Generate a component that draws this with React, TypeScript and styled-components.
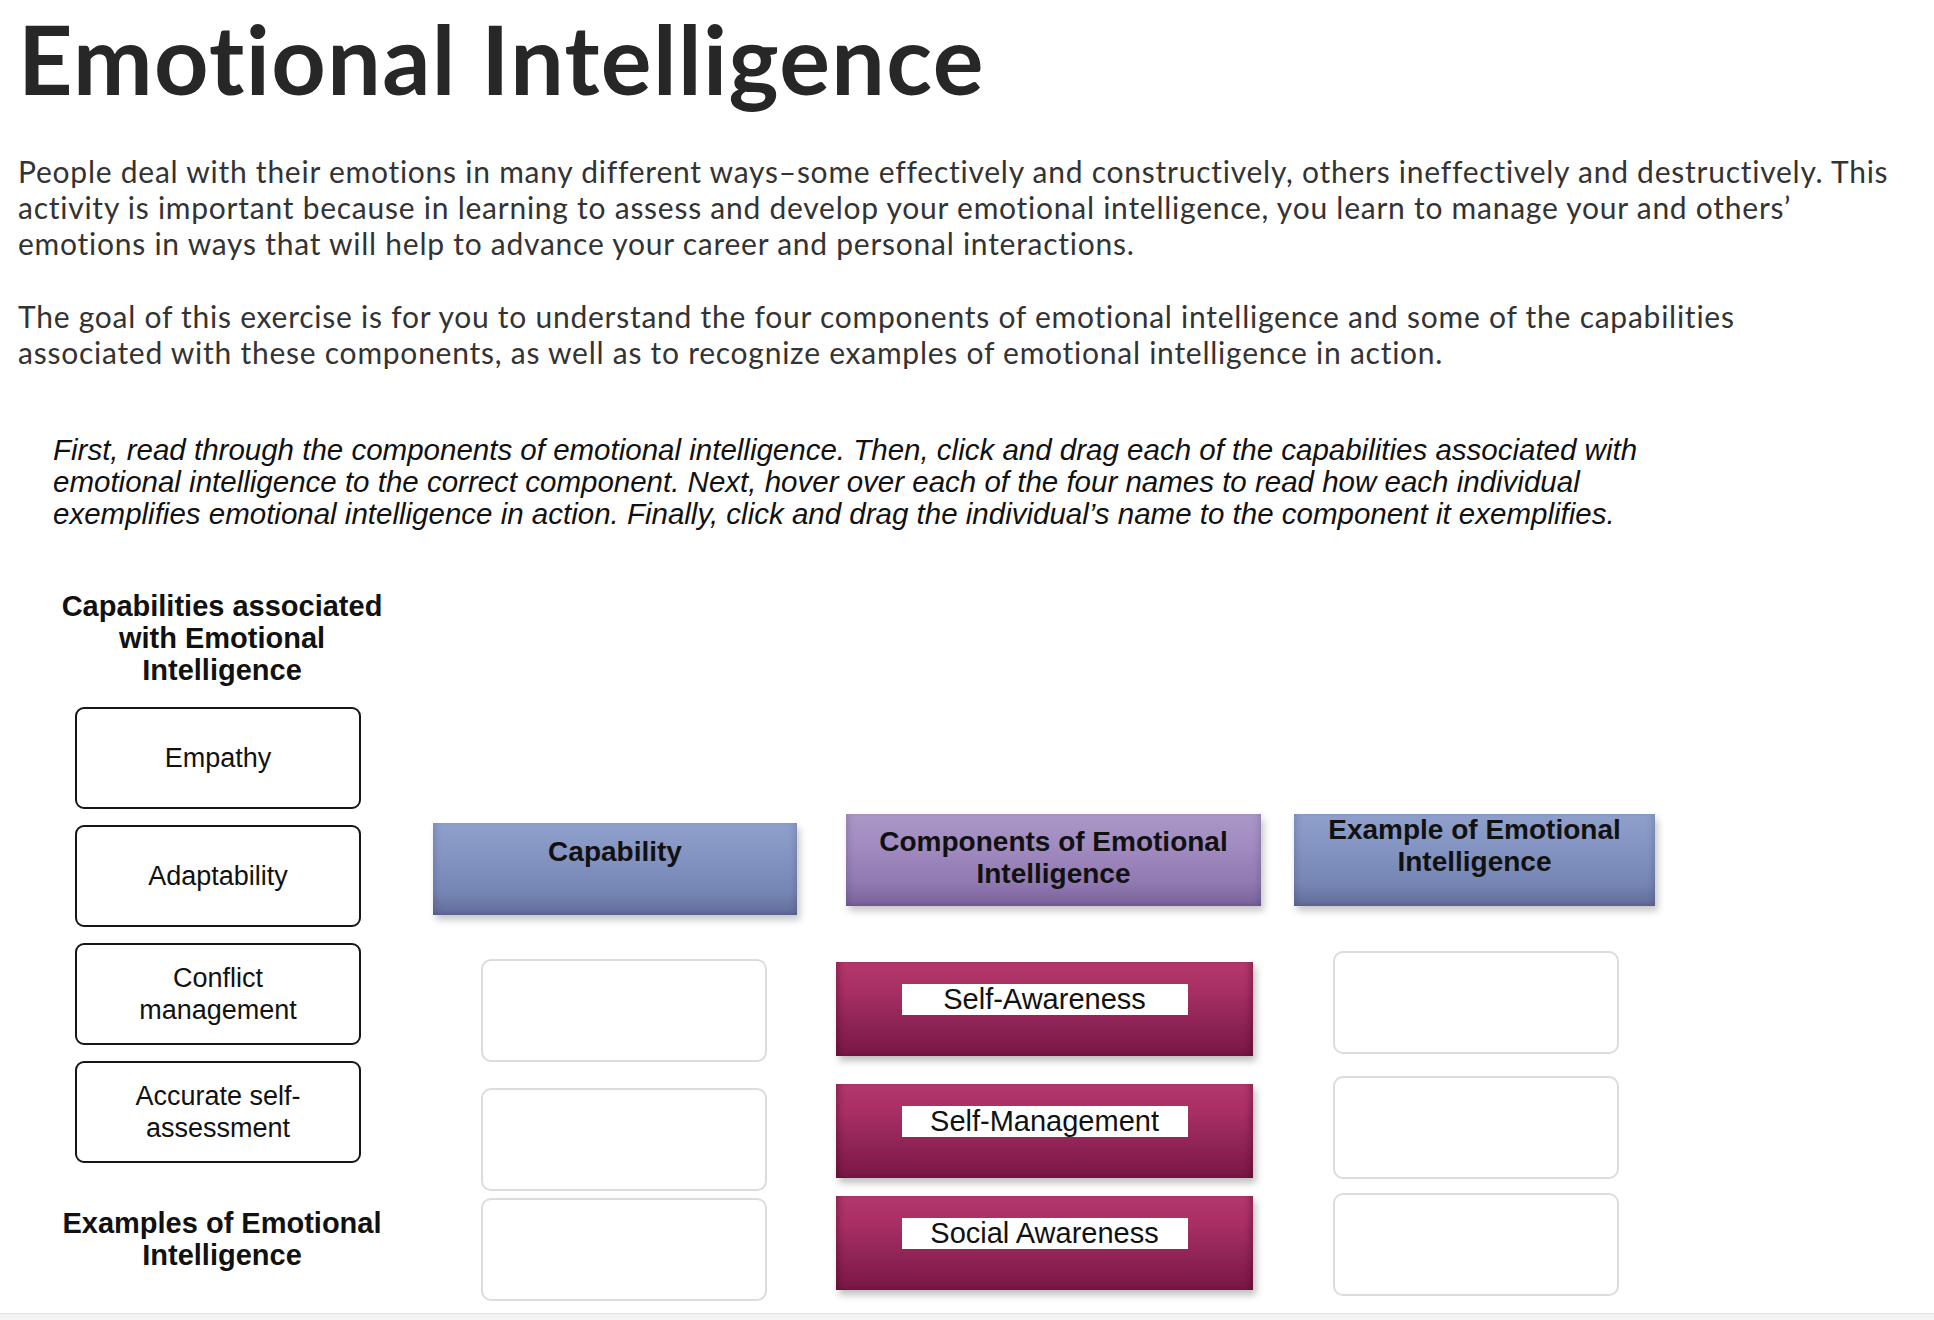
import React from "react";
import styled, { createGlobalStyle } from "styled-components";

const GlobalStyle = createGlobalStyle`
  html, body {
    margin: 0;
    padding: 0;
    background: #ffffff;
  }
  body {
    font-family: "Liberation Sans", Arial, sans-serif;
    color: #111;
  }
`;

const Page = styled.div`
  padding: 0 18px;
`;

const Title = styled.h1`
  margin: 11px 0 0;
  font-family: Lato, "Open Sans", sans-serif;
  font-weight: 700;
  font-size: 95px;
  line-height: 1;
  letter-spacing: 1.4px;
  font-variant-ligatures: none;
  color: #272727;
`;

const Intro = styled.p`
  margin: 47px 0 0;
  font-family: Lato, "Open Sans", sans-serif;
  font-size: 30px;
  line-height: 36px;
  letter-spacing: 0.75px;
  font-variant-ligatures: none;
  color: #333;

  & + & {
    margin-top: 37px;
  }
`;

const Instructions = styled.p`
  margin: 64px 0 0 35px;
  max-width: 1620px;
  font-style: italic;
  font-size: 29.5px;
  line-height: 32px;
  color: #111;
`;

const Board = styled.div`
  display: flex;
  align-items: flex-start;
  margin-top: 60px;
  padding-bottom: 12px;
`;

const Sidebar = styled.div`
  width: 324px;
  margin-left: 42px;
  display: flex;
  flex-direction: column;
  align-items: center;
`;

const SideHeading = styled.h3<{ $top?: number }>`
  margin: ${({ $top }) => $top ?? 0}px 0 0;
  font-size: 29px;
  line-height: 32px;
  font-weight: 700;
  text-align: center;
  color: #111;
`;

const CapabilityList = styled.div`
  align-self: flex-start;
  margin: 21px 0 0 15px;
  display: flex;
  flex-direction: column;
  gap: 16px;
`;

const CapabilityCard = styled.div`
  width: 286px;
  height: 102px;
  box-sizing: border-box;
  padding: 0 30px;
  border: 2px solid #161616;
  border-radius: 9px;
  display: flex;
  align-items: center;
  justify-content: center;
  text-align: center;
  font-size: 27px;
  line-height: 32px;
  color: #111;
`;

const Columns = styled.div`
  display: flex;
  align-items: flex-start;
`;

const Column = styled.div<{ $left: number }>`
  display: flex;
  flex-direction: column;
  align-items: flex-start;
  margin-left: ${({ $left }) => $left}px;
`;

const tones = {
  blue: "linear-gradient(180deg, #8fa0cc 0%, #8595c3 35%, #7686b4 75%, #66729f 94%, #5b6590 100%)",
  purple: "linear-gradient(180deg, #ab97c8 0%, #a18bc0 35%, #9079b0 75%, #7f66a0 94%, #735a92 100%)",
};

const ColumnHeader = styled.div<{ $tone: "blue" | "purple"; $width: number; $top: number; $indent: number; $pad: number }>`
  width: ${({ $width }) => $width}px;
  height: 92px;
  margin: ${({ $top }) => $top}px 0 0 ${({ $indent }) => $indent}px;
  box-sizing: border-box;
  padding-top: ${({ $pad }) => $pad}px;
  background: ${({ $tone }) => tones[$tone]};
  box-shadow: 3px 5px 7px rgba(0, 0, 0, 0.22), inset 6px 0 6px -4px rgba(60, 60, 100, 0.25),
    inset -6px 0 6px -4px rgba(60, 60, 100, 0.25);
  text-align: center;
  font-size: 28px;
  line-height: 32px;
  font-weight: 700;
  color: #111;
`;

const DropSlot = styled.div<{ $top: number; $indent: number }>`
  width: 286px;
  height: 103px;
  margin: ${({ $top }) => $top}px 0 0 ${({ $indent }) => $indent}px;
  box-sizing: border-box;
  border: 2px solid #dcdcdc;
  border-radius: 10px;
  background: #fff;
`;

const ComponentTile = styled.div<{ $top: number }>`
  width: 417px;
  height: 94px;
  margin-top: ${({ $top }) => $top}px;
  box-sizing: border-box;
  padding-top: 22px;
  display: flex;
  justify-content: center;
  align-items: flex-start;
  background: linear-gradient(180deg, #b4386d 0%, #a82f63 30%, #922558 60%, #7f1a49 90%, #751643 100%);
  box-shadow: 3px 5px 7px rgba(0, 0, 0, 0.25), inset 7px 0 6px -4px rgba(70, 0, 30, 0.35),
    inset -7px 0 6px -4px rgba(70, 0, 30, 0.35);
`;

const TileLabel = styled.span`
  width: 286px;
  height: 31px;
  background: #fff;
  text-align: center;
  font-size: 29px;
  line-height: 31px;
  color: #111;
`;

const FooterStrip = styled.div`
  height: 9px;
  margin: 0 -18px;
  border-top: 1px solid #e4e4e4;
  background: #f4f4f4;
`;

const capabilities = ["Empathy", "Adaptability", "Conflict management", "Accurate self-assessment"];

const components = [
  { name: "Self-Awareness", top: 56 },
  { name: "Self-Management", top: 28 },
  { name: "Social Awareness", top: 18 },
];

export default function App() {
  return (
    <>
      <GlobalStyle />
      <Page>
        <Title>Emotional Intelligence</Title>
        <Intro>
          People deal with their emotions in many different ways–some effectively and constructively, others
          ineffectively and destructively. This activity is important because in learning to assess and develop your
          emotional intelligence, you learn to manage your and others’ emotions in ways that will help to advance your
          career and personal interactions.
        </Intro>
        <Intro>
          The goal of this exercise is for you to understand the four components of emotional intelligence and some of
          the capabilities
          <br />
          associated with these components, as well as to recognize examples of emotional intelligence in action.
        </Intro>
        <Instructions>
          First, read through the components of emotional intelligence. Then, click and drag each of the capabilities
          associated with emotional intelligence to the correct component. Next, hover over each of the four names to
          read how each individual exemplifies emotional intelligence in action. Finally, click and drag the
          individual’s name to the component it exemplifies.
        </Instructions>

        <Board>
          <Sidebar>
            <SideHeading>
              Capabilities associated
              <br />
              with Emotional
              <br />
              Intelligence
            </SideHeading>
            <CapabilityList>
              {capabilities.map((c) => (
                <CapabilityCard key={c}>{c}</CapabilityCard>
              ))}
            </CapabilityList>
            <SideHeading $top={44}>
              Examples of Emotional
              <br />
              Intelligence
            </SideHeading>
          </Sidebar>

          <Columns>
            <Column $left={49}>
              <ColumnHeader $tone="blue" $width={364} $top={233} $indent={0} $pad={13}>
                Capability
              </ColumnHeader>
              <DropSlot $top={44} $indent={48} />
              <DropSlot $top={26} $indent={48} />
              <DropSlot $top={7} $indent={48} />
            </Column>

            <Column $left={39}>
              <ColumnHeader $tone="purple" $width={415} $top={224} $indent={10} $pad={12}>
                Components of Emotional
                <br />
                Intelligence
              </ColumnHeader>
              {components.map((c) => (
                <ComponentTile key={c.name} $top={c.top}>
                  <TileLabel>{c.name}</TileLabel>
                </ComponentTile>
              ))}
            </Column>

            <Column $left={33}>
              <ColumnHeader $tone="blue" $width={361} $top={224} $indent={0} $pad={0}>
                Example of Emotional
                <br />
                Intelligence
              </ColumnHeader>
              <DropSlot $top={45} $indent={39} />
              <DropSlot $top={22} $indent={39} />
              <DropSlot $top={14} $indent={39} />
            </Column>
          </Columns>
        </Board>
        <FooterStrip />
      </Page>
    </>
  );
}
